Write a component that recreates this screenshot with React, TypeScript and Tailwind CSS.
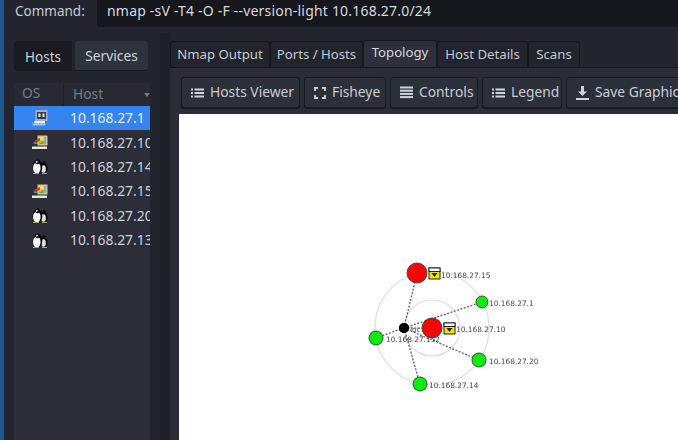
import { Fragment } from "react";
import type { ReactNode } from "react";

const sans = "font-['Noto_Sans','Open_Sans',sans-serif]";

function ListIcon() {
  return (
    <svg width="13" height="10" viewBox="0 0 13 10" fill="#d0d3da">
      <rect x="0" y="0.5" width="2" height="2" />
      <rect x="0" y="4" width="2" height="2" />
      <rect x="0" y="7.5" width="2" height="2" />
      <rect x="3.5" y="0.5" width="9.5" height="2" />
      <rect x="3.5" y="4" width="9.5" height="2" />
      <rect x="3.5" y="7.5" width="9.5" height="2" />
    </svg>
  );
}
function FisheyeIcon() {
  return (
    <svg width="12" height="12" viewBox="0 0 12 12" fill="none" stroke="#d0d3da" strokeWidth="1.8">
      <path d="M1 4V1h3M8 1h3v3M11 8v3H8M4 11H1V8" />
    </svg>
  );
}
function ControlsIcon() {
  return (
    <svg width="13" height="13" viewBox="0 0 13 13" fill="#d0d3da">
      <rect y="0.5" width="13" height="2" />
      <rect y="3.700" width="13" height="2" />
      <rect y="6.900" width="13" height="2" />
      <rect y="10.100" width="13" height="2" />
    </svg>
  );
}
function SaveIcon() {
  return (
    <svg width="13" height="14" viewBox="0 0 13 14" fill="#d0d3da">
      <path d="M5 0h3v5.500h3L6.500 10 2 5.500h3z" />
      <rect y="12" width="13" height="2" />
    </svg>
  );
}
function ToolButton({ icon, label, w }: { icon: ReactNode; label: string; w: string }) {
  return (
    <div className={`${w} h-[31px] shrink-0 flex items-center gap-[6px] pl-[9px] rounded-[3px] bg-[#2c303b] border border-[#191b21] shadow-[0_1px_0_#15171c] text-[#c9ccd3] text-[13.8px] whitespace-nowrap`}>
      {icon}
      <span>{label}</span>
    </div>
  );
}
function OsIcon({ kind }: { kind: string }) {
  if (kind === "router")
    return (
      <svg width="16" height="16" viewBox="0 0 16 16" className="blur-[0.4px]">
        <rect x="3.500" y="0" width="12" height="11" fill="#9fb0d0" />
        <rect x="5" y="2" width="9" height="7" fill="#3a3c44" />
        <rect x="6.500" y="3.500" width="2" height="3.500" fill="#e8e8e8" />
        <rect x="10.500" y="3.500" width="2" height="3.500" fill="#e8e8e8" />
        <rect x="2" y="11" width="11" height="2.500" fill="#e6edf8" />
        <rect x="0.500" y="13.500" width="13" height="2" fill="#a9c4ea" />
      </svg>
    );
  if (kind === "win")
    return (
      <svg width="16" height="15" viewBox="0 0 16 15" className="blur-[0.4px]">
        <path d="M5.500 0.500h10v10h-10z" fill="#d8c184" />
        <path d="M7 2h7v7H7z" fill="#8fa8b8" />
        <path d="M7 2l5 0v3.500L6 6z" fill="#f7e23a" />
        <path d="M1 6.500L8 3v3.500z" fill="#e13a27" />
        <path d="M3 8.500l6-3v3z" fill="#f4b21f" />
        <path d="M0.500 8l3-1 2 2.500z" fill="#3f9fe8" />
        <path d="M7 9l4-3v3z" fill="#3dbb4d" />
        <path d="M0 11.500h15v2.500H0z" fill="#e6e6de" />
      </svg>
    );
  return (
    <svg width="16" height="15" viewBox="0 0 16 15" className="blur-[0.4px]">
      <ellipse cx="12" cy="9" rx="3.500" ry="5" fill="#050505" />
      <ellipse cx="11.500" cy="10" rx="2.400" ry="3.800" fill="#e0e0e0" />
      <ellipse cx="5.500" cy="8" rx="4.800" ry="7" fill="#050505" />
      <ellipse cx="4.800" cy="9" rx="3.800" ry="5.500" fill="#f4f4f4" />
      <circle cx="5.500" cy="2.800" r="2.400" fill="#0a0a0a" />
      <circle cx="4.800" cy="2.800" r="1" fill="#ddd" />
      <circle cx="12" cy="4" r="1.800" fill="#0a0a0a" />
      <path d="M1 14h6v1H1zM10 14h5v1h-5z" fill="#b9a24a" />
    </svg>
  );
}
const hosts = [
  ["router", "10.168.27.1"],
  ["win", "10.168.27.10"],
  ["linux", "10.168.27.14"],
  ["win", "10.168.27.15"],
  ["linux", "10.168.27.20"],
  ["linux", "10.168.27.13"],
];
const labelCls = "fill-[#3d4450] text-[7.4px] font-['DejaVu_Sans',sans-serif]";

function Lock({ x, y }: { x: number; y: number }) {
  return (
    <g>
      <rect x={x} y={y} width="11" height="11" fill="#f2e400" stroke="#222" strokeWidth="1" />
      <rect x={x} y={y} width="11" height="3.500" fill="#fff" stroke="#222" strokeWidth="1" />
      <path d={`M${x + 2.5} ${y + 5}h6l-3 4z`} fill="#222" />
    </g>
  );
}
function Topology() {
  const cx = 404;
  const cy = 328;
  const node = (x: number, y: number, r: number, fill: string) => (
    <Fragment>
      <line x1={cx} y1={cy} x2={x} y2={y} stroke="#555" strokeWidth="1.200" strokeDasharray="2 1.500" />
      <circle cx={x} cy={y} r={r} fill={fill} stroke="#444" strokeWidth="1" />
    </Fragment>
  );
  return (
    <svg width="499" height="326" viewBox="179 114 499 326" className="block blur-[0.3px]">
      <circle cx="432" cy="328" r="57" fill="none" stroke="#dcdcdc" strokeWidth="1.200" />
      <circle cx="432" cy="328" r="28" fill="none" stroke="#dcdcdc" strokeWidth="1.200" />
      {node(417, 273, 10, "#ff0000")}
      {node(482, 302, 6, "#00f000")}
      {node(479, 360, 7, "#00f000")}
      {node(420, 384, 7, "#00f000")}
      {node(376, 338, 7, "#00f000")}
      <circle cx={cx} cy={cy} r="5" fill="#000" />
      <text x="410" y="332" className={labelCls}>loc</text>
      {node(432, 328, 10, "#ff0000")}
      <circle cx={cx} cy={cy} r="5" fill="#000" />
      <Lock x={429} y={268} />
      <Lock x={444} y={323} />
      <text x="441" y="278" className={labelCls}>10.168.27.15</text>
      <text x="489" y="306" className={labelCls}>10.168.27.1</text>
      <text x="456" y="332" className={labelCls}>10.168.27.10</text>
      <text x="489" y="364" className={labelCls}>10.168.27.20</text>
      <text x="429" y="388" className={labelCls}>10.168.27.14</text>
      <text x="386" y="342" className={labelCls}>10.168.27.152</text>
    </svg>
  );
}

export default function App() {
  const tabs = [
    ["Nmap Output", "w-[100px]"],
    ["Ports / Hosts", "w-[93px]"],
    ["Topology", "w-[74px]"],
    ["Host Details", "w-[91px]"],
    ["Scans", "w-[52px]"],
  ];
  return (
    <div className={`${sans} w-[678px] h-[440px] overflow-hidden bg-[#22252d] flex text-[#cfd2d9]`}>
      <div className="w-[4px] shrink-0 bg-[#1a5a86]" />
      <div className="flex-1 min-w-0 flex flex-col">
        <div className="h-[27px] shrink-0 flex items-center">
          <span className="w-[93px] pl-[11px] text-[13.5px] leading-[22px] self-start text-[#c6c9d0] shrink-0">Command:</span>
          <div className="flex-1 h-[27px] bg-[#15171d] rounded-bl-[3px] pl-[10px] text-[14px] tracking-[0.2px] text-[#d5d8de] leading-[22px] whitespace-nowrap">
            nmap -sV -T4 -O -F --version-light 10.168.27.0/24
          </div>
        </div>
        <div className="flex-1 min-h-0 flex">
          <div className="w-[146px] shrink-0 pl-[10px] pt-[14px] flex flex-col">
            <div className="flex gap-[3px] h-[30px] shrink-0">
              <div className="w-[58px] pt-[2px] flex items-center justify-center rounded-[3px] bg-[#191b21] text-[13.5px]">Hosts</div>
              <div className="w-[73px] pt-[2px] flex items-center justify-center rounded-[3px] bg-[#2f333e] border-b border-[#16181d] text-[13.8px]">Services</div>
            </div>
            <div className="w-[136px] mt-[12px] flex-1 min-h-0 overflow-hidden bg-[#2b2e38]">
              <div className="h-[23px] flex text-[13.8px] text-[#767a85] bg-[#272a33]">
                <div className="w-[50px] pl-[8px] border-r border-[#1f2128]">OS</div>
                <div className="flex-1 pl-[9px] flex items-center justify-between">
                  <span>Host</span>
                  <span className="w-0 h-0 border-x-[3px] border-x-transparent border-t-[4px] border-t-[#767a85]" />
                </div>
              </div>
              {hosts.map(([k, ip], i) => (
                <div key={ip} className={`h-[24.4px] flex items-center text-[13.9px] whitespace-nowrap ${i === 0 ? "bg-[#3584f0] text-[#e9eef8]" : "text-[#cfd2d9]"}`}>
                  <div className="w-[18px] shrink-0" />
                  <div className="w-[38px] shrink-0"><OsIcon kind={k} /></div>
                  <span className="pt-[1px]">{ip}</span>
                </div>
              ))}
            </div>
          </div>
          <div className="w-[10px] shrink-0 ml-[10px] mt-[6px] bg-[#1f2128]" />
          <div className="flex-1 min-w-0 pt-[14px] flex flex-col">
            <div className="flex h-[27px] shrink-0 border-b border-[#16181d] text-[13.2px] text-[#c6c9d0]">
              {tabs.map(([t, w]) => (
                <div key={t} className={`${w} shrink-0 flex items-center justify-center whitespace-nowrap rounded-t-[3px] border border-b-0 border-[#16181d] ${t === "Topology" ? "bg-[#2c303b] text-[#d5d8de] -mt-[1px] pb-[2px]" : "bg-[#22252d]"}`}>
                  {t}
                </div>
              ))}
            </div>
            <div className="flex-1 min-h-0 flex flex-col bg-[#2a2d37]">
              <div className="flex gap-[4px] pl-[11px] pt-[9px] h-[46px] shrink-0 overflow-hidden">
                <ToolButton icon={<ListIcon />} label="Hosts Viewer" w="w-[119px]" />
                <ToolButton icon={<FisheyeIcon />} label="Fisheye" w="w-[82px]" />
                <ToolButton icon={<ControlsIcon />} label="Controls" w="w-[88px]" />
                <ToolButton icon={<ListIcon />} label="Legend" w="w-[80px]" />
                <ToolButton icon={<SaveIcon />} label="Save Graphic" w="w-[118px]" />
              </div>
              <div className="flex-1 min-h-0 bg-white ml-[9px] overflow-hidden">
                <Topology />
              </div>
            </div>
          </div>
        </div>
      </div>
    </div>
  );
}
